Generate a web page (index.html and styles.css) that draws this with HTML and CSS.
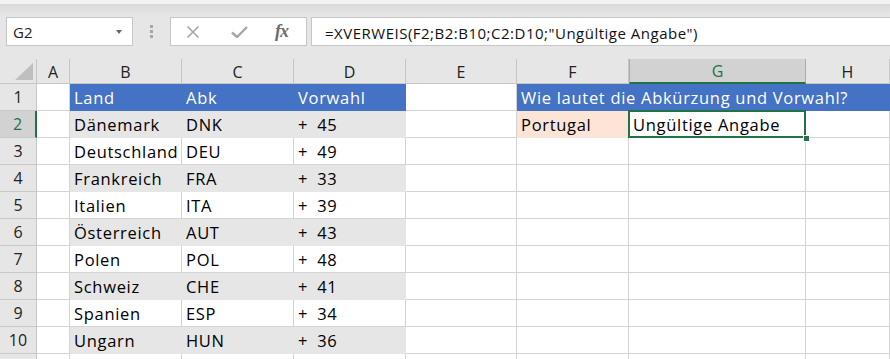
FILE: index.html
```html
<!DOCTYPE html>
<html lang="de">
<head>
    <meta charset="UTF-8">
    <title>XVERWEIS</title>
    <link rel="stylesheet" href="styles.css">
</head>
<body>
<div class="toolbar">
    <div class="namebox">
        <span>G2</span>
        <span class="caret"></span>
    </div>
    <div class="grip"><i></i><i></i><i></i></div>
    <div class="fnbtns">
        <svg class="ico" width="14" height="12" viewBox="0 0 14 12">
            <path d="M1.5 0.5 L12.5 11.5 M12.5 0.5 L1.5 11.5" stroke="#a6a6a6" stroke-width="1.6" fill="none"/>
        </svg>
        <svg class="ico" width="17" height="12" viewBox="0 0 17 12">
            <path d="M1 6.5 L6 11 L16 1" stroke="#a6a6a6" stroke-width="2.4" fill="none"/>
        </svg>
        <span class="fx">fx</span>
    </div>
    <div class="formula">=XVERWEIS(F2;B2:B10;C2:D10;"Ungültige Angabe")</div>
</div>

<div class="sheet">
    <!-- Spaltenköpfe -->
    <div class="corner"><span class="tri"></span></div>
    <div class="ch">A</div>
    <div class="ch">B</div>
    <div class="ch">C</div>
    <div class="ch">D</div>
    <div class="ch">E</div>
    <div class="ch">F</div>
    <div class="ch active">G</div>
    <div class="ch">H</div>

    <!-- Zeile 1 -->
    <div class="rh">1</div>
    <div class="c"></div>
    <div class="c blue">Land</div>
    <div class="c blue">Abk</div>
    <div class="c blue">Vorwahl</div>
    <div class="c"></div>
    <div class="c blue wide">Wie lautet die Abkürzung und Vorwahl?</div>

    <!-- Zeile 2 -->
    <div class="rh active">2</div>
    <div class="c"></div>
    <div class="c band">Dänemark</div>
    <div class="c band">DNK</div>
    <div class="c band"><span class="plus">+</span>45</div>
    <div class="c"></div>
    <div class="c peach">Portugal</div>
    <div class="c sel">Ungültige Angabe<span class="handle"></span></div>
    <div class="c"></div>

    <!-- Zeile 3 -->
    <div class="rh">3</div>
    <div class="c"></div>
    <div class="c">Deutschland</div>
    <div class="c">DEU</div>
    <div class="c"><span class="plus">+</span>49</div>
    <div class="c"></div><div class="c"></div><div class="c"></div><div class="c"></div>

    <!-- Zeile 4 -->
    <div class="rh">4</div>
    <div class="c"></div>
    <div class="c band">Frankreich</div>
    <div class="c band">FRA</div>
    <div class="c band"><span class="plus">+</span>33</div>
    <div class="c"></div><div class="c"></div><div class="c"></div><div class="c"></div>

    <!-- Zeile 5 -->
    <div class="rh">5</div>
    <div class="c"></div>
    <div class="c">Italien</div>
    <div class="c">ITA</div>
    <div class="c"><span class="plus">+</span>39</div>
    <div class="c"></div><div class="c"></div><div class="c"></div><div class="c"></div>

    <!-- Zeile 6 -->
    <div class="rh">6</div>
    <div class="c"></div>
    <div class="c band">Österreich</div>
    <div class="c band">AUT</div>
    <div class="c band"><span class="plus">+</span>43</div>
    <div class="c"></div><div class="c"></div><div class="c"></div><div class="c"></div>

    <!-- Zeile 7 -->
    <div class="rh">7</div>
    <div class="c"></div>
    <div class="c">Polen</div>
    <div class="c">POL</div>
    <div class="c"><span class="plus">+</span>48</div>
    <div class="c"></div><div class="c"></div><div class="c"></div><div class="c"></div>

    <!-- Zeile 8 -->
    <div class="rh">8</div>
    <div class="c"></div>
    <div class="c band">Schweiz</div>
    <div class="c band">CHE</div>
    <div class="c band"><span class="plus">+</span>41</div>
    <div class="c"></div><div class="c"></div><div class="c"></div><div class="c"></div>

    <!-- Zeile 9 -->
    <div class="rh">9</div>
    <div class="c"></div>
    <div class="c">Spanien</div>
    <div class="c">ESP</div>
    <div class="c"><span class="plus">+</span>34</div>
    <div class="c"></div><div class="c"></div><div class="c"></div><div class="c"></div>

    <!-- Zeile 10 -->
    <div class="rh">10</div>
    <div class="c"></div>
    <div class="c band">Ungarn</div>
    <div class="c band">HUN</div>
    <div class="c band"><span class="plus">+</span>36</div>
    <div class="c"></div><div class="c"></div><div class="c"></div><div class="c"></div>

    <!-- Zeile 11 (nur angeschnitten sichtbar) -->
    <div class="rh"></div>
    <div class="c"></div><div class="c"></div><div class="c"></div><div class="c"></div>
    <div class="c"></div><div class="c"></div><div class="c"></div><div class="c"></div>
</div>
</body>
</html>
```

FILE: styles.css
```css
* {
    box-sizing: border-box;
}

html, body {
    height: 100%;
}

body {
    margin: 0;
    background: #fff;
    font-family: "Open Sans", "Noto Sans", sans-serif;
    color: #000;
    overflow: hidden;
}

/* Bearbeitungsleiste */
.toolbar {
    height: 59px;
    display: flex;
    align-items: flex-start;
    padding-top: 17px;
    background: linear-gradient(#f3f2f1 0, #f3f2f1 4px, #d9d9d9 4px, #e6e6e6 15px);
}

.namebox {
    margin-left: 6px;
    width: 127px;
    height: 29px;
    background: #fff;
    border: 1px solid #c6c6c6;
    display: flex;
    align-items: center;
    justify-content: space-between;
    padding: 0 10px 0 6px;
    font-size: 15px;
    color: #222;
}

.caret {
    width: 0;
    height: 0;
    border-left: 3px solid transparent;
    border-right: 3px solid transparent;
    border-top: 4px solid #666;
}

.grip {
    width: 37px;
    height: 29px;
    display: flex;
    flex-direction: column;
    align-items: center;
    justify-content: center;
    gap: 2px;
}

.grip i {
    display: block;
    width: 3px;
    height: 3px;
    background: #a6a6a6;
}

.fnbtns {
    width: 137px;
    height: 29px;
    background: #fff;
    border: 1px solid #c6c6c6;
    display: flex;
    align-items: center;
    padding-left: 15px;
}

.fnbtns .ico {
    display: block;
}

.fnbtns .ico + .ico {
    margin-left: 31px;
}

.fx {
    margin-left: 27px;
    font-family: "Liberation Serif", "DejaVu Serif", serif;
    font-style: italic;
    font-weight: bold;
    font-size: 18px;
    color: #6b6b6b;
    letter-spacing: -1px;
    line-height: 1;
    padding-bottom: 2px;
}

.formula {
    flex: 1;
    margin-left: 4px;
    margin-right: -2px;
    height: 29px;
    background: #fff;
    border: 1px solid #c6c6c6;
    display: flex;
    align-items: center;
    padding: 2px 0 0 13px;
    font-size: 15px;
    letter-spacing: 0.5px;
    color: #111;
    white-space: nowrap;
}

/* Tabellenblatt */
.sheet {
    height: 300px;
    overflow: hidden;
    display: grid;
    grid-template-columns: 37px 33px 112px 112px 112px 111px 112px 177px 1fr;
    grid-template-rows: 25px repeat(11, 27px);
}

.corner {
    background: #e6e6e6;
    border-right: 1px solid #c6c6c6;
    border-bottom: 1px solid #c6c6c6;
}

.tri {
    display: block;
    width: 0;
    height: 0;
    margin: 4px 0 0 15px;
    border-left: 18px solid transparent;
    border-bottom: 17px solid #bfbfbf;
}

.ch {
    background: #e6e6e6;
    border-right: 1px solid #c6c6c6;
    border-bottom: 1px solid #c6c6c6;
    display: flex;
    align-items: center;
    justify-content: center;
    font-size: 16px;
    color: #222;
    padding-top: 1px;
}

.ch.active {
    background: #d2d2d2;
    color: #217346;
    border-right-color: #ababab;
    border-left: 1px solid #ababab;
    border-bottom: 2px solid #217346;
}

.rh {
    background: #e6e6e6;
    border-right: 1px solid #c6c6c6;
    border-bottom: 1px solid #c8c8c8;
    display: flex;
    align-items: center;
    justify-content: center;
    font-size: 16px;
    color: #222;
}

.rh.active {
    background: #d2d2d2;
    color: #217346;
    border-right: 2px solid #217346;
}

.c {
    border-right: 1px solid #d4d4d4;
    border-bottom: 1px solid #d4d4d4;
    display: flex;
    align-items: center;
    padding: 1px 4px 0;
    font-size: 16.5px;
    letter-spacing: 0.7px;
    white-space: nowrap;
}

.c.blue {
    background: #4472c4;
    border-color: #4472c4;
    color: #fff;
}

.c.wide {
    grid-column: span 3;
}

.c.band {
    background: #e7e6e6;
    border-color: #e7e6e6;
}

.c.peach {
    background: #fce4d6;
    border-color: #fce4d6;
}

.plus {
    margin-right: 9px;
}

.sel {
    position: relative;
    z-index: 1;
}

.sel::after {
    content: "";
    position: absolute;
    top: -1px;
    left: -1px;
    right: -1px;
    bottom: -1px;
    border: 2px solid #217346;
}

.handle {
    position: absolute;
    right: -4px;
    bottom: -4px;
    width: 5px;
    height: 5px;
    background: #217346;
    box-shadow: 0 0 0 1px #fff;
    z-index: 2;
}
```
